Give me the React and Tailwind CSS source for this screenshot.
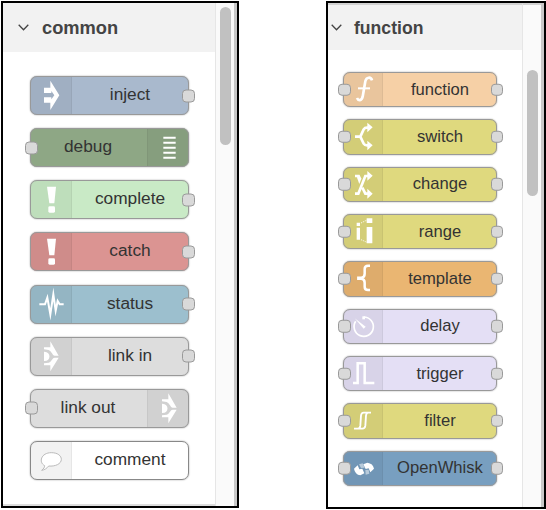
import React from "react";

const port = "absolute top-1/2 -translate-y-1/2 rounded-[4px] border-[1.5px] border-[#999] bg-[#d9d9d9]";

const icons = {
  inject: (
    <path d="M61 14 88 58 61 102V80H42V64H64V70L73 58 64 45V51H42V35H61Z" fill="white" />
  ),
  debug: <path d="M46 29H83M46 44H83M46 59H83M46 74H83M46 89H83" stroke="white" strokeWidth="6" />,
  bang: (
    <g fill="white">
      <path d="M51 20H78L73 70H58Z" />
      <rect x="55" y="79" width="20" height="19" rx="4" />
    </g>
  ),
  status: (
    <path d="M28 58H45L52 38 61 88 70 28 77 77 83 48 89 58H101" fill="none" stroke="white" strokeWidth="6" strokeMiterlimit="12" />
  ),
  link: (
    <>
      <path d="M61 13 86 56H74C67 56 66 43 56 39L42 37V31H61Z M61 103 86 62H74C67 62 66 73 56 77L42 79V85H61Z" fill="white" />
      <path d="M42 44C64 43 64 73 42 72Z" fill="white" />
    </>
  ),
  comment: (
    <path d="M44 74C25 64 33 35 64 35C84 35 94 45 94 55C94 69 75 77 56 75C51 82 43 87 35 88C41 83 44 79 44 74Z" fill="#fff" stroke="#bbb" strokeWidth="3" />
  ),
  fn: (
    <g fill="none" stroke="white">
      <path d="M87 25C84 14 70 14 67 28L59 74C56 87 46 87 42 78" strokeWidth="8" />
      <path d="M45 49H81" strokeWidth="6" />
    </g>
  ),
  switch: (
    <g fill="none" stroke="white" strokeWidth="8">
      <path d="M36 53H52L62 31Q65 26 72 26H77M52 53L62 74Q65 79 72 79H77" />
      <path d="M73 11 89 25 73 40ZM73 65 89 79 73 94Z" fill="white" stroke="none" />
    </g>
  ),
  change: (
    <g fill="none" stroke="white" strokeWidth="8">
      <path d="M36 80H46L67 27H76M36 27H47L52 38M58 62 67 80H76" />
      <path d="M73 12 89 26 73 41ZM73 65 89 80 73 95Z" fill="white" stroke="none" />
      <path d="M41 29 49 51 55 35Z" fill="white" stroke="none" />
    </g>
  ),
  range: (
    <g fill="white">
      <path d="M41 26H51V36H41ZM41 41H51V77H41ZM71 13H88V27H71ZM71 39H88V88H71Z" />
      <path d="M54 27 70 19M54 77 70 84" stroke="white" strokeWidth="2.5" strokeDasharray="4 3" />
    </g>
  ),
  template: (
    <path d="M81 14H75Q65 14 65 24V38Q65 49 55 50H46V53H55Q65 54 65 65V77Q65 87 75 87H81" fill="none" stroke="white" strokeWidth="7.5" />
  ),
  delay: (
    <g fill="none" stroke="white">
      <path d="M62 24A29 29 0 1 1 38 37" strokeWidth="5" />
      <path d="M62 22V31" strokeWidth="8" />
      <path d="M35 28 68 53 62 59Z" fill="white" stroke="none" />
    </g>
  ),
  trigger: <path d="M30 81H44V22H65V81H94" fill="none" stroke="white" strokeWidth="7.5" />,
  filter: (
    <path d="M33 77H44Q51 77 52 68L54 38Q55 29 62 29H84M46 77H58Q66 77 67 68L69 38Q70 29 76 29" fill="none" stroke="white" strokeWidth="5.5" />
  ),
  whisk: (
    <g fill="white">
      <path d="M33 53 44 43 49 55 58 53 64 67 52 73Q36 70 33 53Z" />
      <path d="M93 53 82 64 77 52 68 54 61 40 73 35Q90 37 93 53Z" />
      <path d="M48 40 59 37 65 50 54 51ZM67 57 77 56 79 68 68 71Z" opacity=".5" />
    </g>
  ),
};

function Node({ label, icon, color, side = "left", ports = "r", big, border = "border-[#999]" }) {
  const right = side === "right";
  return (
    <div
      className={`relative flex shrink-0 ${right ? "flex-row-reverse" : ""} ${big ? "h-[39px] w-[159px]" : "h-[35.3px] w-[154px]"} ${color} rounded-[7px]`}
    >
      <div
        className={`h-full bg-black/5 ${big ? "w-[42px]" : "w-10"} ${right ? "rounded-r-[7px] border-l" : "rounded-l-[7px] border-r"} border-black/5`}
      >
        <svg className={big ? "h-[39px] w-[41px]" : "h-[35px] w-10"} viewBox={big ? "0 0 123 117" : "0 0 120 105"}>
          {icons[icon]}
        </svg>
      </div>
      <div className={`flex flex-1 items-center justify-center text-[#333] ${big ? "pb-[3px] pr-px text-[17.3px]" : "text-[16.6px]"}`}>
        <span className="leading-5">{label}</span>
      </div>
      <div className={`absolute inset-0 rounded-[7px] border ${border} shadow-[0_0_1.5px_#888]`} />
      {ports.includes("l") && <div className={`${port} ${big ? "-left-[5px] size-[13px]" : "-left-[5px] size-[12.5px]"}`} />}
      {ports.includes("r") && <div className={`${port} ${big ? "-right-[6px] size-[13px]" : "-right-[6px] size-[12.5px]"}`} />}
    </div>
  );
}

function Chevron({ className = "" }) {
  return (
    <svg className={`h-[7px] w-[11px] ${className}`} viewBox="0 0 11 7">
      <path d="M.7 .8 5.5 5.7 10.3 .8" fill="none" stroke="#444" strokeWidth="1.3" />
    </svg>
  );
}

const common = [
  { label: "inject", icon: "inject", color: "bg-[#a9b9cd]" },
  { label: "debug", icon: "debug", color: "bg-[#8ea785]", side: "right", ports: "l" },
  { label: "complete", icon: "bang", color: "bg-[#c9eac6]" },
  { label: "catch", icon: "bang", color: "bg-[#db9492]" },
  { label: "status", icon: "status", color: "bg-[#9cbfce]" },
  { label: "link in", icon: "link", color: "bg-[#dddddd]" },
  { label: "link out", icon: "link", color: "bg-[#dddddd]", side: "right", ports: "l" },
  { label: "comment", icon: "comment", color: "bg-white", ports: "" },
];

const functions = [
  { label: "function", icon: "fn", color: "bg-[#f6d0a6]" },
  { label: "switch", icon: "switch", color: "bg-[#dfd97e]" },
  { label: "change", icon: "change", color: "bg-[#dfd97e]" },
  { label: "range", icon: "range", color: "bg-[#dfd97e]" },
  { label: "template", icon: "template", color: "bg-[#eab672]" },
  { label: "delay", icon: "delay", color: "bg-[#e4dff5]" },
  { label: "trigger", icon: "trigger", color: "bg-[#e4dff5]" },
  { label: "filter", icon: "filter", color: "bg-[#dfd97e]" },
  { label: "OpenWhisk", icon: "whisk", color: "bg-[#789fc0]" },
];

export default function App() {
  return (
    <div className="flex h-[510px] w-[546px] items-start overflow-hidden bg-white font-['Liberation_Sans',Arial,sans-serif]">
      <section className="ml-px mt-px flex h-[507px] w-[238px] border-2 border-black">
        <div className="flex w-[212px] flex-col border-b-2 border-b-[#ddd]">
          <header className="flex h-[49px] shrink-0 items-center bg-[#f2f2f2] pl-[15px]">
            <Chevron />
            <h2 className="ml-[13px] text-[18.3px] font-bold leading-6 text-[#444]">common</h2>
          </header>
          <div className="ml-[27px] mt-6 flex h-[404px] flex-col justify-between">
            {common.map((n) => (
              <Node key={n.label} {...n} big border={n.label === "comment" ? "border-[#888]" : "border-[#999]"} />
            ))}
          </div>
        </div>
        <div className="flex w-[19px] justify-center border-l border-[#e6e6e6] bg-[#fafafa] pt-1">
          <div className="h-[138px] w-[11px] rounded-full bg-[#c1c1c1]" />
        </div>
        <div className="flex-1 bg-[#c8c8c8]" />
      </section>

      <section className="ml-[87px] mt-px flex h-[508px] w-[220px] border-2 border-black">
        <div className="flex w-[194px] flex-col border-t-2 border-t-[#d2d2d2]">
          <header className="flex h-[45px] shrink-0 items-center bg-[#f2f2f2] pl-[3px]">
            <Chevron />
            <h2 className="ml-[12px] text-[17.6px] font-bold leading-6 text-[#444]">function</h2>
          </header>
          <div className="ml-[15px] mt-[22px] flex h-[414px] flex-col justify-between">
            {functions.map((n) => (
              <Node key={n.label} {...n} ports="lr" />
            ))}
          </div>
        </div>
        <div className="flex w-[19px] justify-center border-l border-t-2 border-[#e6e6e6] border-t-[#d2d2d2] bg-[#fafafa] pt-[65px]">
          <div className="h-[126px] w-[11px] rounded-full bg-[#c1c1c1]" />
        </div>
        <div className="flex-1 bg-[#c8c8c8]" />
      </section>
    </div>
  );
}
